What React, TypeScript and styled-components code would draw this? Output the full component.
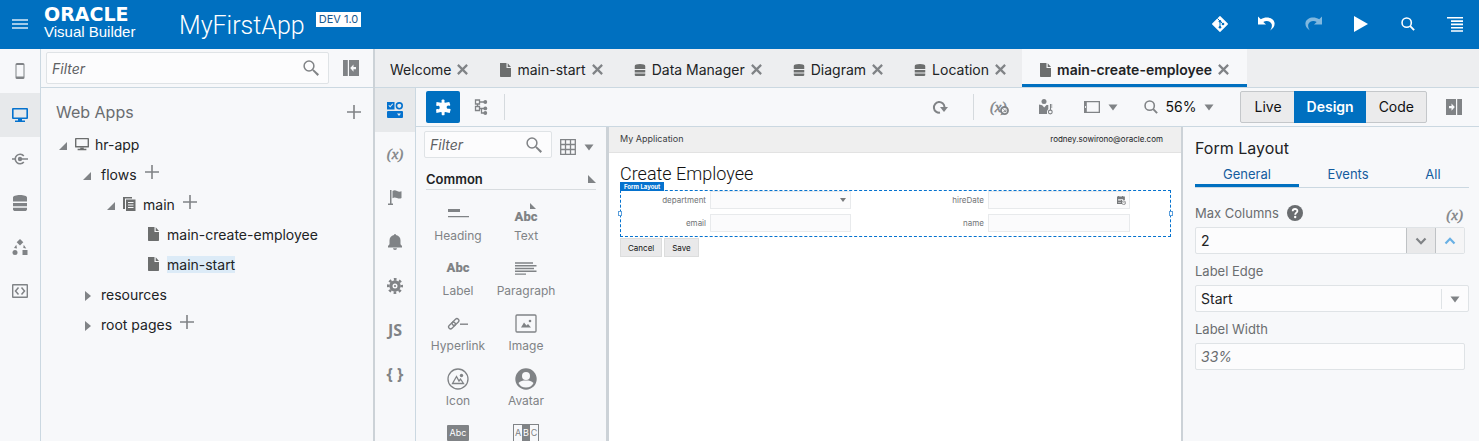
import React from "react";
import styled, { createGlobalStyle, css } from "styled-components";

const c = {
  blue: "#0572ce",
  bar: "#0070c0",
  panel: "#f7f8fa",
  line: "#cbd8e1",
  split: "#ccd2d7",
  icon: "#808386",
  dark: "#6c6e6e",
  text: "#212325",
  muted: "#6a6d70",
  field: "#fcfcfd",
  fieldLine: "#dfe3e6",
  link: "#145c9e",
};

const Global = createGlobalStyle`
  *, *::before, *::after { box-sizing: border-box; }
  body { margin: 0; font: 14px/20px Inter, "Liberation Sans", sans-serif; color: ${c.text}; }
  button, input, select { font: inherit; color: inherit; margin: 0; }
  button { border: 0; padding: 0; background: none; cursor: pointer; }
  ul { list-style: none; margin: 0; padding: 0; }
  h1, h2, h3, p { margin: 0; font-weight: 400; }
  a { color: inherit; text-decoration: none; }
  svg { display: block; flex: none; }
`;

/* ---------- icons ---------- */

const Svg = styled.svg<{ $size?: number }>`
  width: ${(p) => p.$size ?? 16}px;
  height: ${(p) => p.$size ?? 16}px;
  fill: currentColor;
`;

type IconProps = { size?: number };

const Phone = () => (
  <Svg viewBox="0 0 16 16" aria-hidden>
    <path fillRule="evenodd" d="M5 0h6a1.500 1.500 0 0 1 1.500 1.500v13a1.500 1.500 0 0 1-1.500 1.500h-6a1.500 1.500 0 0 1-1.500-1.500v-13A1.500 1.500 0 0 1 5 0zM4.500 2v11.500h7V2z" />
  </Svg>
);
const Monitor = ({ size }: IconProps) => (
  <Svg viewBox="0 0 16 16" $size={size} aria-hidden>
    <path fillRule="evenodd" d="M1 1h14a1 1 0 0 1 1 1v9a1 1 0 0 1-1 1H1a1 1 0 0 1-1-1V2a1 1 0 0 1 1-1zm.6 1.600v7.800h12.800V2.600z" />
    <path d="M6 12h4v1.500h3V15H3v-1.500h3z" />
  </Svg>
);
const Endpoint = () => (
  <Svg viewBox="0 0 16 16" fill="none" aria-hidden>
    <path d="M0 8h4M8 8h8" stroke="currentColor" strokeWidth="1.500" />
    <path d="M11.800 5A4.800 4.800 0 1 0 11.800 11" stroke="currentColor" strokeWidth="1.600" fill="none" />
    <circle cx="8" cy="8" r="2.200" />
  </Svg>
);
const Database = ({ size }: IconProps) => (
  <Svg viewBox="0 0 16 16" $size={size} aria-hidden>
    <path d="M1 2.500C1 1 4 0 8 0s7 1 7 2.500V6.500H1zM1 8h14v3.200H1zM1 12.700h14v1.800c0 .9-1 1.500-2 1.500H3c-1 0-2-.6-2-1.500z" />
  </Svg>
);
const Process = () => (
  <Svg viewBox="0 0 16 16" aria-hidden>
    <path d="M8 0l3.300 3.300L8 6.600 4.700 3.300zM10.500 11h5v5h-5zM4.300 5.800L5 9.500 2 9z M11.700 5.800l2.600 3.600-3-.3z" />
    <circle cx="3" cy="13.500" r="2.500" />
  </Svg>
);
const Source = () => (
  <Svg viewBox="0 0 16 16" aria-hidden>
    <path fillRule="evenodd" d="M1 1h14a1 1 0 0 1 1 1v12a1 1 0 0 1-1 1H1a1 1 0 0 1-1-1V2a1 1 0 0 1 1-1zm.4 1.400v11.200h13.200V2.400z" />
    <path d="M6.500 4.500L3.500 8l3 3.500M9.500 4.500l3 3.500-3 3.500" fill="none" stroke="currentColor" strokeWidth="1.500" />
  </Svg>
);
const Lens = ({ size }: IconProps) => (
  <Svg viewBox="0 0 16 16" $size={size} aria-hidden>
    <circle cx="6" cy="6" r="4.900" fill="none" stroke="currentColor" strokeWidth="1.500" />
    <path d="M9.300 10.500l1.200-1.200 5.500 5-1.500 1.700z" />
  </Svg>
);
const LensThin = () => (
  <Svg viewBox="0 0 16 16" $size={14} aria-hidden>
    <circle cx="6.500" cy="6.500" r="5.300" fill="none" stroke="currentColor" strokeWidth="1.800" />
    <path d="M10.500 10.500l4.500 4.500" stroke="currentColor" strokeWidth="2.200" />
  </Svg>
);
const CollapseLeft = () => (
  <Svg viewBox="0 0 16 16" aria-hidden>
    <path fillRule="evenodd" d="M0 0h4.800v16H0zM6 0h10v16H6zM7.200 8l3.300-3.500V7H13v2.200h-2.500v2.500z" />
  </Svg>
);
const CollapseRight = () => (
  <Svg viewBox="0 0 16 16" aria-hidden>
    <path fillRule="evenodd" d="M11.200 0H16v16h-4.800zM0 0h10v16H0zM8.800 8L5.500 4.500V7H3v2.200h2.500v2.500z" />
  </Svg>
);
const Plus = () => (
  <Svg viewBox="0 0 14 14" $size={14} aria-hidden>
    <path d="M6.200 0h1.600v6.200H14v1.600H7.800V14H6.200V7.800H0V6.200h6.200z" />
  </Svg>
);
const Open = () => (
  <Svg viewBox="0 0 8 8" $size={8} aria-hidden><path d="M8 0v8H0z" /></Svg>
);
const Closed = () => (
  <Svg viewBox="0 0 10 10" $size={10} aria-hidden><path d="M2 0l6 5-6 5z" /></Svg>
);
const Down = () => (
  <Svg viewBox="0 0 10 10" $size={10} aria-hidden><path d="M0.500 2.500h9L5 8.500z" /></Svg>
);
const Fold = () => (
  <Svg viewBox="0 0 8 8" $size={8} aria-hidden><path d="M0 0l8 8H0z" /></Svg>
);
const Flow = () => (
  <Svg viewBox="0 0 14 14" $size={14} aria-hidden>
    <path d="M0 0h9v1.500H2V12H0z" />
    <path fillRule="evenodd" d="M3 2.500h9.500V14H3zM5 5h5.500v1H5zM5 7.500h5.500v1H5zM5 10h5.500v1H5z" />
  </Svg>
);
const Page = () => (
  <Svg viewBox="0 0 14 14" $size={14} aria-hidden>
    <path d="M1 0h6.500v5H12v8.300a.7.700 0 0 1-.7.700H1.700a.7.700 0 0 1-.7-.7zM8.700 0.300L12 3.900H8.700z" />
  </Svg>
);
const Cross = () => (
  <Svg viewBox="0 0 10 10" $size={11} aria-hidden>
    <path d="M.8.800l8.400 8.400M9.200.800L.8 9.200" stroke="currentColor" strokeWidth="2" />
  </Svg>
);
const Git = () => (
  <Svg viewBox="0 0 16 16" aria-hidden>
    <path d="M8 0.700L15.300 8 8 15.300.7 8z" stroke="currentColor" strokeLinejoin="round" strokeWidth="1.300" />
    <path d="M5.500 2.500L8 5v6M8 5l3 3" stroke={c.bar} strokeWidth="1" fill="none" />
    <g fill={c.bar}><circle cx="8" cy="5.200" r="1.300" /><circle cx="8" cy="11.300" r="1.300" /><circle cx="11" cy="8" r="1.300" /></g>
  </Svg>
);
const undoPath = "M0 1v8h8L5.300 6.400C8 4.700 12.200 5 13.600 8.500c.7 2 0 4.300-1.600 6.500C15.300 13 17 10.300 16.500 7.300 15.600 2.300 8.300.4 2.800 3.800z";
const Undo = () => (
  <Svg viewBox="0 0 17 16" $size={17} aria-hidden><path d={undoPath} /></Svg>
);
const Redo = () => (
  <Svg viewBox="0 0 17 16" $size={17} aria-hidden>
    <path transform="matrix(-1 0 0 1 17 0)" d={undoPath} />
  </Svg>
);
const Play = () => (
  <Svg viewBox="0 0 16 16" aria-hidden><path d="M1 0l14 8L1 16z" /></Svg>
);
const Outline = () => (
  <Svg viewBox="0 0 16 16" aria-hidden>
    <path d="M0 1h16v1.600H0zM4 4.300h12V6H4zM4 7.600h12v1.600H4zM4 10.900h12v1.600H4zM4 14.200h12v1.600H4z" />
  </Svg>
);
const Menu = () => (
  <Svg viewBox="0 0 16 16" aria-hidden>
    <path d="M0 3h16v2H0zM0 7h16v2H0zM0 11h16v2H0z" />
  </Svg>
);
const Components = () => (
  <Svg viewBox="0 0 16 16" aria-hidden>
    <path fillRule="evenodd" d="M0 0h7.500v7.500H0zM1.400 3.600l1.800 2 3-3.500-.8-.7-2.300 2.700-.9-1zM1 9h14a1 1 0 0 1 1 1v5a1 1 0 0 1-1 1H1a1 1 0 0 1-1-1v-5a1 1 0 0 1 1-1zM10 11.500l2 2.500 2-2.500z" />
    <circle cx="12.300" cy="3.800" r="2.900" fill="none" stroke="currentColor" strokeWidth="1.600" />
  </Svg>
);
const Flag = () => (
  <Svg viewBox="0 0 16 16" aria-hidden>
    <path d="M3 0h1.500v13.500H6V15H1v-1.500h2zM5.500 1c1.500-1 3-.8 4.500 0s3 .9 4.500.2V8c-1.500.8-3 .6-4.500 0s-3-.9-4.500.2z" />
  </Svg>
);
const Bell = () => (
  <Svg viewBox="0 0 16 16" aria-hidden>
    <path d="M7 1a1 1 0 0 1 2 0c3 .7 4.500 2.700 4.500 5.500v3.800L15 12v1.500H1V12l1.500-1.700V6.500C2.500 3.700 4 1.700 7 1zM6 14.300h4a2 1.700 0 0 1-4 0z" />
  </Svg>
);
const Gear = () => (
  <Svg viewBox="0 0 16 16" aria-hidden>
    <circle cx="8" cy="8" r="4.100" fill="none" stroke="currentColor" strokeWidth="3.200" />
    <circle cx="8" cy="8" r="6.700" fill="none" stroke="currentColor" strokeWidth="2.600" strokeDasharray="2.631 2.631" strokeDashoffset="1.315" />
    <circle cx="8" cy="8" r="1.100" />
  </Svg>
);
const Puzzle = () => (
  <Svg viewBox="0 0 17 17" $size={17} aria-hidden>
    <path d="M1.500 3l4.700.8c1.200-.6.100-1.300.3-2.300C6.800.3 9.300.3 9.600 1.500c.2 1-.9 1.700.4 2.300l4.300-.8 1 3c-.1.700-.6.900-1.300.7-1.500-.4-2.300.4-2.300 1.600s.9 1.700 2.300 1.500c.8-.1 1.500.1 1.700.8l-1 3.300-4.500-.8c-1.500.500-.3 1.300-.6 2.300-.3 1.200-2.600 1.200-2.900 0-.3-1 .8-1.800-.7-2.300l-4.600.8-.3-3.200c.2-.8.900-.9 1.600-.6 1.300.4 2-.4 2-1.700s-.9-1.800-2.200-1.500c-.7.200-1.300 0-1.300-.7z" />
  </Svg>
);
const Structure = () => (
  <Svg viewBox="0 0 16 16" aria-hidden>
    <path d="M2.500 1h4v4h-4zM2.500 7.500h4v4h-4zM6.500 3h5M4.500 5v2.500M6.500 9.500h5M8.500 9.500v4.500h3" fill="none" stroke="currentColor" strokeWidth="1.300" />
    <circle cx="12.300" cy="3" r="1.900" /><circle cx="12.300" cy="9.400" r="1.900" /><circle cx="12.300" cy="14" r="1.900" />
  </Svg>
);
const Reload = () => (
  <Svg viewBox="0 0 16 16" aria-hidden>
    <path d="M8 13.600A5.300 5.300 0 1 1 12.500 8" fill="none" stroke="currentColor" strokeWidth="2" />
    <path d="M8 8h8l-4 5z" />
  </Svg>
);
const UserKey = () => (
  <Svg viewBox="0 0 16 16" aria-hidden>
    <circle cx="6" cy="2.500" r="2.500" />
    <path d="M1 5.500l3.200.8L6.200 8.500 8.500 6h1.800v4L9 12v3H1z" />
    <path d="M12.500 5v6M12.500 6h1.800M12.500 8h1.800" stroke="currentColor" strokeWidth="1.100" />
    <circle cx="12.300" cy="13" r="1.900" fill="none" stroke="currentColor" strokeWidth="1.100" />
  </Svg>
);
const Tablet = () => (
  <Svg viewBox="0 0 16 16" aria-hidden>
    <path fillRule="evenodd" d="M0 2h16v12H0zM2.800 3.200v9.600h11.900V3.200zM1 7v2h.9V7z" />
  </Svg>
);
const Grid = () => (
  <Svg viewBox="0 0 16 16" aria-hidden>
    <path d="M.7.700h14.600v14.600H.7z M.7 5.500h14.600M.7 10.500h14.600M5.500.700v14.600M10.500.700v14.600" fill="none" stroke="currentColor" strokeWidth="1.300" />
  </Svg>
);
const Bug = () => (
  <Svg viewBox="0 0 12 12" $size={9} aria-hidden>
    <circle cx="6" cy="6" r="4.700" fill={c.panel} stroke="currentColor" strokeWidth="2.400" />
    <path d="M4.500 4.500l3.500 3M8 4.500v3H4.500" stroke="currentColor" strokeWidth="1.200" fill="none" />
  </Svg>
);
const Help = () => (
  <Svg viewBox="0 0 16 16" aria-hidden>
    <circle cx="8" cy="8" r="8" />
    <path d="M5.700 6.300c0-3 4.700-3 4.700-.3 0 1.700-2.200 1.700-2.200 3.700" fill="none" stroke="#fff" strokeWidth="1.800" />
    <circle cx="8.200" cy="12" r="1.200" fill="#fff" />
  </Svg>
);
const Chevron = ({ up }: { up?: boolean }) => (
  <Svg viewBox="0 0 12 12" $size={12} aria-hidden>
    <path d={up ? "M1.500 8.500L6 3.800l4.500 4.700" : "M1.500 3.500L6 8.200l4.500-4.700"} fill="none" stroke="currentColor" strokeWidth="2.200" />
  </Svg>
);
const Calendar = () => (
  <Svg viewBox="0 0 16 16" $size={9} aria-hidden>
    <path fillRule="evenodd" d="M0 1h2V0h2v1h5V0h2v1h3v6H9v7H0zM2 5.500v1h9v-1zM2 8v1h5V8zM2 10.500v1h5v-1z" />
    <circle cx="12" cy="12" r="3.300" fill="#fff" stroke="currentColor" strokeWidth="1.300" />
    <path d="M12 10v2.300h2" stroke="currentColor" fill="none" />
  </Svg>
);

/* ---------- shell ---------- */

const Shell = styled.div`
  height: 100vh;
  display: flex;
  flex-direction: column;
  overflow: hidden;
  background: ${c.panel};
`;
const Header = styled.header`
  flex: none;
  height: 49px;
  display: flex;
  align-items: flex-start;
  padding: 0 16px 0 12px;
  background: ${c.bar};
  color: #fff;
`;
const MenuButton = styled.button`
  margin-top: 16px;
  color: #a3cbe9;
`;
const Brand = styled.div`
  margin: 4px 0 0 16px;
  width: 135px;
  font-family: "Liberation Sans", sans-serif;
`;
const Logo = styled.div`
  font: 700 19px/20px "DejaVu Sans", sans-serif;
`;
const Product = styled.div`
  font-size: 15px;
  line-height: 16px;
`;
const AppName = styled.h1`
  font: 300 25px/32px Roboto, sans-serif;
  margin-top: 10px;
`;
const Version = styled.span`
  margin: 12px 0 0 11px;
  padding: 0 3px;
  background: #fff;
  color: #17598f;
  font-size: 11px;
  line-height: 15px;
`;
const Actions = styled.nav`
  margin: 15px 0 0 auto;
  display: flex;
  gap: 30px;
`;
const HeadButton = styled.button<{ $off?: boolean }>`
  width: 17px;
  height: 17px;
  display: grid;
  place-items: center;
  opacity: ${(p) => (p.$off ? 0.5 : 1)};
`;
const Body = styled.div`
  flex: 1;
  min-height: 0;
  display: flex;
`;
const Rail = styled.nav`
  flex: none;
  width: 41px;
  border-right: 1px solid ${c.line};
  color: ${c.icon};
`;
const RailButton = styled.button<{ $on?: boolean }>`
  width: 100%;
  height: 44px;
  display: grid;
  place-items: center;
  ${(p) => p.$on && css`background: #e7e9eb; color: ${c.blue};`}
`;
const RailWord = styled.span`
  font: 700 16px/20px "Open Sans", sans-serif;
`;

/* ---------- navigator ---------- */

const Navigator = styled.aside`
  flex: none;
  width: 334px;
  border-right: 2px solid ${c.split};
`;
const NavTop = styled.div`
  height: 39px;
  display: flex;
  align-items: flex-start;
  padding: 3px 14px 0 5px;
  gap: 14px;
  border-bottom: 1px solid ${c.line};
  color: ${c.icon};
`;
const SearchBox = styled.label<{ $small?: boolean }>`
  flex: 1;
  min-width: 0;
  height: ${(p) => (p.$small ? 27 : 32)}px;
  display: flex;
  align-items: center;
  padding: 0 9px 0 5px;
  border: 1px solid ${c.fieldLine};
  border-radius: 2px;
  background: ${c.field};
  color: ${c.icon};
`;
const SearchInput = styled.input`
  flex: 1;
  min-width: 0;
  height: 100%;
  border: 0;
  padding: 0;
  outline: 0;
  background: none;
  color: ${c.text};
  &::placeholder { color: #5e6164; font-style: italic; opacity: 1; }
`;
const PlainButton = styled.button<{ $top?: number }>`
  display: flex;
  align-items: center;
  color: ${c.icon};
  margin-top: ${(p) => p.$top ?? 0}px;
`;
const NavTitle = styled.div`
  display: flex;
  align-items: center;
  justify-content: space-between;
  height: 41px;
  padding: 7px 12px 0 15px;
`;
const NavHeading = styled.h2`
  font-size: 16px;
  color: ${c.muted};
`;
const TreeRow = styled.li<{ $depth: number }>`
  display: flex;
  align-items: center;
  height: 30px;
  padding-left: ${(p) => 18 + p.$depth * 24}px;
  color: ${c.icon};
`;
const Twisty = styled.span<{ $closed?: boolean }>`
  width: 8px;
  margin-right: ${(p) => (p.$closed === undefined ? 8 : 10)}px;
  padding-top: 3px;
`;
const TreeIcon = styled.span`
  width: 20px;
  color: ${c.dark};
`;
const TreeLink = styled.a<{ $on?: boolean }>`
  color: ${c.text};
  line-height: 17px;
  background: ${(p) => (p.$on ? "#dcebf7" : "none")};
`;
const Add = styled.button`
  margin: -4px 0 0 8px;
  color: ${c.icon};
`;

/* ---------- editor ---------- */

const Editor = styled.main`
  flex: 1;
  min-width: 0;
  display: flex;
  flex-direction: column;
`;
const FileTabs = styled.div`
  flex: none;
  height: 39px;
  display: flex;
  background: #edeef0;
  border-bottom: 1px solid ${c.line};
`;
const FileTab = styled.div<{ $on?: boolean }>`
  display: flex;
  align-items: center;
  padding: 3px 16px 0 15px;
  color: ${c.dark};
  ${(p) => p.$on && css`
    padding: 6px 18px 0 17px;
    background: ${c.panel};
    border-bottom: 3px solid ${c.bar};
    font-weight: 600;
  `}
`;
const TabIcon = styled.span`
  width: 18px;
`;
const TabName = styled.a`
  color: ${c.text};
`;
const CloseButton = styled.button`
  margin-left: 6px;
  color: ${c.icon};
`;
const Work = styled.div`
  flex: 1;
  min-height: 0;
  display: flex;
`;
const WorkMain = styled.div`
  flex: 1;
  min-width: 0;
  display: flex;
  flex-direction: column;
`;
const Toolbar = styled.div`
  flex: none;
  height: 39px;
  display: flex;
  align-items: center;
  padding: 0 17px 0 10px;
  border-bottom: 1px solid ${c.line};
  color: ${c.icon};
`;
const Spacer = styled.div`
  flex: 1;
`;
const PaletteButton = styled.button`
  width: 34px;
  height: 32px;
  display: grid;
  place-items: center;
  border-radius: 2px;
  background: ${c.bar};
  color: #fff;
  margin-right: 13px;
`;
const Divider = styled.span<{ $before: number }>`
  width: 1px;
  height: 26px;
  margin: 0 16px 0 ${(p) => p.$before}px;
  background: #d5dade;
`;
const ToolGroup = styled.div<{ $gap: number; $after: number }>`
  display: flex;
  align-items: center;
  gap: ${(p) => p.$gap}px;
  margin-right: ${(p) => p.$after}px;
`;
const Variable = styled.span<{ $low?: boolean }>`
  font: italic 400 15px/16px "Liberation Serif", serif;
  color: ${c.icon};
  -webkit-text-stroke: 0.4px ${c.icon};
  ${(p) => p.$low && css`align-self: flex-end; margin-right: 6px;`}
`;
const VariableBug = styled.span`
  display: flex;
  align-items: flex-end;
  & > svg { margin-left: -7px; }
`;
const Zoom = styled.span`
  color: #111;
`;
const Segments = styled.div`
  display: flex;
  height: 32px;
  margin-right: 19px;
  border: 1px solid #c4c7ca;
  border-radius: 2px;
  background: #ebebec;
`;
const Segment = styled.button<{ $on?: boolean }>`
  padding: 0 12px 0 13px;
  color: #111;
  ${(p) => p.$on && css`background: ${c.bar}; color: #fff; font-weight: 600; margin: -1px 0;`}
`;
const Panes = styled.div`
  flex: 1;
  min-height: 0;
  display: flex;
`;
const Palette = styled.section`
  flex: none;
  width: 193px;
  border-right: 3px solid ${c.split};
  padding: 4px 8px 0 8px;
  overflow: hidden;
`;
const PaletteTop = styled.div`
  display: flex;
  align-items: flex-start;
  gap: 8px;
  padding-right: 4px;
`;
const PaletteHead = styled.div`
  display: flex;
  align-items: center;
  justify-content: space-between;
  margin: 11px 2px 0;
  height: 21px;
  border-bottom: 1px solid #d8dcdf;
  color: ${c.icon};
`;
const PaletteTitle = styled.h3`
  font-size: 13px;
  font-weight: 600;
  color: ${c.text};
`;
const ItemGrid = styled.ul`
  display: grid;
  grid-template-columns: 68px 68px;
  grid-auto-rows: 55px;
  padding-top: 10px;
`;
const Item = styled.li`
  display: flex;
  flex-direction: column;
  align-items: center;
  font-size: 12px;
  line-height: 16px;
  color: ${c.icon};
`;
const ItemArt = styled.svg`
  width: 28px;
  height: 28px;
  fill: currentColor;
  text { font: 900 13px Roboto, sans-serif; text-anchor: middle; }
`;

/* ---------- page being designed ---------- */

const Canvas = styled.section`
  flex: 1;
  min-width: 0;
  background: #fff;
  font-size: 8px;
  line-height: 12px;
`;
const CanvasHead = styled.div`
  height: 26px;
  display: flex;
  align-items: center;
  justify-content: space-between;
  padding: 0 18px 2px 11px;
  background: #efefef;
  border-bottom: 1px solid #e2e2e2;
`;
const AppLabel = styled.span`
  font-size: 9px;
  color: #3b3d3f;
`;
const CanvasBody = styled.div`
  padding: 9px 10px 0 11px;
`;
const CanvasTitle = styled.h2`
  font: 300 18px/24px Roboto, sans-serif;
  color: #111;
`;
const Selection = styled.div`
  position: relative;
  margin-top: 4px;
  padding: 0 40px 4px 0;
  border: 1px dashed ${c.blue};
`;
const SelectionTag = styled.span`
  position: absolute;
  left: -1px;
  top: -9px;
  padding: 0 4px;
  background: ${c.blue};
  color: #fff;
  font-size: 6px;
  font-weight: 700;
  line-height: 9px;
`;
const Handle = styled.span<{ $right?: boolean }>`
  position: absolute;
  top: 20px;
  ${(p) => (p.$right ? "right" : "left")}: -3px;
  width: 4px;
  height: 5px;
  border: 1px solid #5b9fdc;
  background: #fff;
`;
const FormGrid = styled.div`
  display: grid;
  grid-template-columns: 1fr 1fr;
  gap: 5px 48px;
`;
const FormField = styled.label`
  display: grid;
  grid-template-columns: 85px 1fr;
  gap: 4px;
  align-items: center;
  text-align: right;
  color: #707375;
`;
const MiniBox = styled.span`
  height: 18px;
  display: flex;
  align-items: center;
  padding: 0 3px;
  border: 1px solid #e8eaec;
  background: #fbfbfc;
  color: #77797b;
`;
const MiniInput = styled.input`
  flex: 1;
  min-width: 0;
  border: 0;
  padding: 0;
  background: none;
  outline: 0;
`;
const MiniCaret = styled.svg`
  width: 6px;
  height: 6px;
  margin-right: 1px;
  fill: currentColor;
`;
const MiniButtons = styled.div`
  display: flex;
  gap: 2px;
  margin-top: 1px;
`;
const MiniButton = styled.button`
  height: 19px;
  padding: 0 7px;
  border: 1px solid #dcdddd;
  background: #e9e9ea;
  color: #111;
`;

/* ---------- properties ---------- */

const Properties = styled.aside`
  flex: none;
  width: 298px;
  border-left: 2px solid ${c.split};
  padding: 9px 10px 0 12px;
  color: ${c.muted};
`;
const PropTitle = styled.h2`
  font-size: 16px;
  line-height: 24px;
  color: ${c.text};
`;
const PropTabs = styled.div`
  display: grid;
  grid-template-columns: 104fr 98fr 72fr;
  height: 28px;
  margin-bottom: 15px;
  border-bottom: 1px solid ${c.line};
`;
const PropTab = styled.button<{ $on?: boolean }>`
  padding-top: 4px;
  font-size: 13px;
  color: ${c.link};
  border-bottom: 3px solid ${(p) => (p.$on ? c.bar : "transparent")};
`;
const Caption = styled.div`
  display: flex;
  align-items: center;
  height: 20px;
  margin: 7px 0 4px;
  font-size: 13px;
`;
const CaptionLabel = styled.label`
  margin-right: 8px;
`;
const NumberRow = styled.div`
  display: flex;
  height: 27px;
  margin-right: 4px;
  border: 1px solid ${c.fieldLine};
  border-radius: 2px;
  background: ${c.field};
`;
const TextInput = styled.input`
  flex: 1;
  min-width: 0;
  padding: 0 5px;
  border: 0;
  outline: 0;
  background: none;
  font-size: 14px;
  color: ${c.text};
  &::placeholder { color: ${c.muted}; font-style: italic; opacity: 1; }
`;
const Step = styled.button<{ $up?: boolean }>`
  width: 29px;
  display: grid;
  place-items: center;
  border-left: 1px solid #bfc2c5;
  background: ${(p) => (p.$up ? "#f5f5f6" : "#e9e9ea")};
  color: ${(p) => (p.$up ? "#69b0e4" : c.icon)};
`;
const SelectRow = styled.div`
  display: grid;
  align-items: center;
  height: 27px;
  border: 1px solid ${c.fieldLine};
  border-radius: 2px;
  background: ${c.field};
  & > * { grid-area: 1 / 1; }
`;
const Select = styled.select`
  appearance: none;
  border: 0;
  outline: 0;
  padding: 0 5px;
  background: none;
  font-size: 14px;
  color: ${c.text};
`;
const SelectArrow = styled.span`
  justify-self: end;
  display: grid;
  place-items: center;
  width: 27px;
  height: 20px;
  border-left: 1px solid ${c.fieldLine};
  color: ${c.icon};
  pointer-events: none;
`;

/* ---------- data ---------- */

const leftRail = [
  { name: "Mobile Apps", icon: <Phone /> },
  { name: "Web Apps", icon: <Monitor />, on: true },
  { name: "Service Connections", icon: <Endpoint /> },
  { name: "Business Objects", icon: <Database /> },
  { name: "Processes", icon: <Process /> },
  { name: "Source", icon: <Source /> },
];

const pageRail = [
  { name: "Page Designer", icon: <Components />, on: true },
  { name: "Variables", icon: <Variable>(x)</Variable> },
  { name: "Action Chains", icon: <Flag /> },
  { name: "Events", icon: <Bell /> },
  { name: "Settings", icon: <Gear /> },
  { name: "JavaScript", icon: <RailWord>JS</RailWord> },
  { name: "Metadata", icon: <RailWord>{"{ }"}</RailWord> },
];

type Node = { name: string; depth: number; closed?: boolean; icon?: React.ReactNode; add?: boolean; on?: boolean };
const tree: Node[] = [
  { name: "hr-app", depth: 0, icon: <Monitor size={14} /> },
  { name: "flows", depth: 1, closed: false, add: true },
  { name: "main", depth: 2, icon: <Flow />, add: true },
  { name: "main-create-employee", depth: 3, icon: <Page /> },
  { name: "main-start", depth: 3, icon: <Page />, on: true },
  { name: "resources", depth: 1, closed: true },
  { name: "root pages", depth: 1, closed: true, add: true },
];

const files = [
  { name: "Welcome" },
  { name: "main-start", icon: <Page /> },
  { name: "Data Manager", icon: <Database size={12} /> },
  { name: "Diagram", icon: <Database size={12} /> },
  { name: "Location", icon: <Database size={12} /> },
  { name: "main-create-employee", icon: <Page />, on: true },
];

const items = [
  { name: "Heading", art: <path d="M4 9h12v3H4zM4 16h21v1.300H4z" /> },
  { name: "Text", art: <><text x="14" y="21">Abc</text><path d="M18 3l6 6h-6z" /></> },
  { name: "Label", art: <text x="14" y="17">Abc</text> },
  { name: "Paragraph", art: <path d="M3 7.300h18v1.400H3zM3 10h21.500v1.400H3zM3 12.800h19v1.400H3zM3 15.600h21.500V17H3zM3 18.400h11v1.400H3z" /> },
  {
    name: "Hyperlink",
    art: <>
      <path d="M16 13.500h8v1.400h-8z" />
      <g fill="none" stroke="currentColor" strokeWidth="1.300">
        <rect x="4" y="13.500" width="8" height="4" rx="2" transform="rotate(-45 8 15.500)" />
        <rect x="7.500" y="10" width="8" height="4" rx="2" transform="rotate(-45 11.500 12)" />
      </g>
    </>,
  },
  {
    name: "Image",
    art: <>
      <rect x="4" y="5" width="20" height="17" rx="1" fill="none" stroke="currentColor" strokeWidth="1.300" />
      <path d="M9 17.500l3-5 2.500 3 1.500-1.500 3 3.500z" /><circle cx="18" cy="11" r="1.300" />
    </>,
  },
  {
    name: "Icon",
    art: <>
      <circle cx="14" cy="14" r="10" fill="none" stroke="currentColor" strokeWidth="1.300" />
      <path d="M8.500 18.500l4-7 2.500 4.500 1.500-2 3 4.500z" fill="none" stroke="currentColor" strokeWidth="1.300" /><circle cx="17.500" cy="10.500" r="1.700" />
    </>,
  },
  {
    name: "Avatar",
    art: <>
      <circle cx="14" cy="14" r="10.700" /><circle cx="14" cy="11" r="4" fill={c.panel} />
      <path d="M6.500 18c2-2 4-2.500 7.500-2.500s5.500.5 7.500 2.500c-1.500 3-4 4.500-7.500 4.500S8 21 6.500 18z" fill={c.panel} />
    </>,
  },
];

const BadgeArt = styled.span`
  margin-top: 5px;
  padding: 0 3px;
  border-radius: 1px;
  background: ${c.icon};
  color: #fff;
  font-size: 9px;
`;
const LettersArt = styled.span`
  margin-top: 4px;
  display: grid;
  grid-template-columns: repeat(3, 8px);
  border: 1px solid ${c.icon};
  text-align: center;
  font-size: 9px;
  b { font-weight: 400; background: ${c.icon}; color: #fff; }
`;

export default function App() {
  return (
    <Shell>
      <Global />
      <Header>
        <MenuButton aria-label="Menu"><Menu /></MenuButton>
        <Brand>
          <Logo>ORACLE</Logo>
          <Product>Visual Builder</Product>
        </Brand>
        <AppName>MyFirstApp</AppName>
        <Version>DEV 1.0</Version>
        <Actions>
          <HeadButton aria-label="Git"><Git /></HeadButton>
          <HeadButton aria-label="Undo"><Undo /></HeadButton>
          <HeadButton aria-label="Redo" $off><Redo /></HeadButton>
          <HeadButton aria-label="Run"><Play /></HeadButton>
          <HeadButton aria-label="Search"><LensThin /></HeadButton>
          <HeadButton aria-label="Options"><Outline /></HeadButton>
        </Actions>
      </Header>
      <Body>
        <Rail>
          {leftRail.map((r) => (
            <RailButton key={r.name} aria-label={r.name} $on={r.on}>{r.icon}</RailButton>
          ))}
        </Rail>
        <Navigator>
          <NavTop>
            <SearchBox>
              <SearchInput placeholder="Filter" aria-label="Filter artifacts" />
              <Lens />
            </SearchBox>
            <PlainButton aria-label="Collapse navigator" $top={8}><CollapseLeft /></PlainButton>
          </NavTop>
          <NavTitle>
            <NavHeading>Web Apps</NavHeading>
            <PlainButton aria-label="Add web app"><Plus /></PlainButton>
          </NavTitle>
          <ul>
            {tree.map((n) => (
              <TreeRow key={n.name} $depth={n.depth}>
                <Twisty $closed={n.closed}>{n.closed ? <Closed /> : n.depth < 3 ? <Open /> : null}</Twisty>
                {n.icon && <TreeIcon>{n.icon}</TreeIcon>}
                <TreeLink href="#" $on={n.on}>{n.name}</TreeLink>
                {n.add && <Add aria-label={`Add to ${n.name}`}><Plus /></Add>}
              </TreeRow>
            ))}
          </ul>
        </Navigator>
        <Editor>
          <FileTabs>
            {files.map((f) => (
              <FileTab key={f.name} $on={f.on}>
                {f.icon && <TabIcon>{f.icon}</TabIcon>}
                <TabName href="#">{f.name}</TabName>
                <CloseButton aria-label={`Close ${f.name}`}><Cross /></CloseButton>
              </FileTab>
            ))}
          </FileTabs>
          <Work>
            <Rail>
              {pageRail.map((r) => (
                <RailButton key={r.name} aria-label={r.name} $on={r.on}>{r.icon}</RailButton>
              ))}
            </Rail>
            <WorkMain>
              <Toolbar>
                <PaletteButton aria-label="Components"><Puzzle /></PaletteButton>
                <PlainButton aria-label="Structure"><Structure /></PlainButton>
                <Divider $before={15} />
                <Spacer />
                <PlainButton aria-label="Reload"><Reload /></PlainButton>
                <Divider $before={25} />
                <ToolGroup $gap={29} $after={30}>
                  <PlainButton aria-label="Debug variables">
                    <VariableBug><Variable>(x)</Variable><Bug /></VariableBug>
                  </PlainButton>
                  <PlainButton aria-label="User roles"><UserKey /></PlainButton>
                </ToolGroup>
                <ToolGroup $gap={8} $after={26}>
                  <Tablet /><Down />
                </ToolGroup>
                <ToolGroup $gap={8} $after={26}>
                  <LensThin /><Zoom>56%</Zoom><Down />
                </ToolGroup>
                <Segments>
                  <Segment>Live</Segment>
                  <Segment $on>Design</Segment>
                  <Segment>Code</Segment>
                </Segments>
                <PlainButton aria-label="Collapse properties"><CollapseRight /></PlainButton>
              </Toolbar>
              <Panes>
                <Palette>
                  <PaletteTop>
                    <SearchBox $small>
                      <SearchInput placeholder="Filter" aria-label="Filter components" />
                      <Lens />
                    </SearchBox>
                    <PlainButton aria-label="View as grid" $top={8}><Grid /></PlainButton>
                    <PlainButton aria-label="View options" $top={11}><Down /></PlainButton>
                  </PaletteTop>
                  <PaletteHead>
                    <PaletteTitle>Common</PaletteTitle>
                    <Fold />
                  </PaletteHead>
                  <ItemGrid>
                    {items.map((i) => (
                      <Item key={i.name}>
                        <ItemArt viewBox="0 0 28 28" aria-hidden>{i.art}</ItemArt>
                        {i.name}
                      </Item>
                    ))}
                    <Item><BadgeArt>Abc</BadgeArt></Item>
                    <Item><LettersArt>A<b>B</b><span>C</span></LettersArt></Item>
                  </ItemGrid>
                </Palette>
                <Canvas>
                  <CanvasHead>
                    <AppLabel>My Application</AppLabel>
                    <span>rodney.sowirono@oracle.com</span>
                  </CanvasHead>
                  <CanvasBody>
                    <CanvasTitle>Create Employee</CanvasTitle>
                    <Selection>
                      <SelectionTag>Form Layout</SelectionTag>
                      <Handle /><Handle $right />
                      <FormGrid>
                        <FormField>
                          department
                          <MiniBox>
                            <MiniInput />
                            <MiniCaret viewBox="0 0 6 6"><path d="M0 1h6L3 5z" /></MiniCaret>
                          </MiniBox>
                        </FormField>
                        <FormField>hireDate<MiniBox><MiniInput /><Calendar /></MiniBox></FormField>
                        <FormField>email<MiniBox><MiniInput /></MiniBox></FormField>
                        <FormField>name<MiniBox><MiniInput /></MiniBox></FormField>
                      </FormGrid>
                    </Selection>
                    <MiniButtons>
                      <MiniButton>Cancel</MiniButton>
                      <MiniButton>Save</MiniButton>
                    </MiniButtons>
                  </CanvasBody>
                </Canvas>
                <Properties>
                  <PropTitle>Form Layout</PropTitle>
                  <PropTabs>
                    <PropTab $on>General</PropTab>
                    <PropTab>Events</PropTab>
                    <PropTab>All</PropTab>
                  </PropTabs>
                  <Caption>
                    <CaptionLabel htmlFor="cols">Max Columns</CaptionLabel>
                    <Help />
                    <Spacer />
                    <Variable $low>(x)</Variable>
                  </Caption>
                  <NumberRow>
                    <TextInput id="cols" defaultValue="2" />
                    <Step aria-label="Decrease"><Chevron /></Step>
                    <Step aria-label="Increase" $up><Chevron up /></Step>
                  </NumberRow>
                  <Caption><CaptionLabel htmlFor="edge">Label Edge</CaptionLabel></Caption>
                  <SelectRow>
                    <Select id="edge" defaultValue="Start">
                      <option>Start</option>
                      <option>Top</option>
                    </Select>
                    <SelectArrow><Down /></SelectArrow>
                  </SelectRow>
                  <Caption><CaptionLabel htmlFor="width">Label Width</CaptionLabel></Caption>
                  <NumberRow>
                    <TextInput id="width" placeholder="33%" />
                  </NumberRow>
                </Properties>
              </Panes>
            </WorkMain>
          </Work>
        </Editor>
      </Body>
    </Shell>
  );
}
